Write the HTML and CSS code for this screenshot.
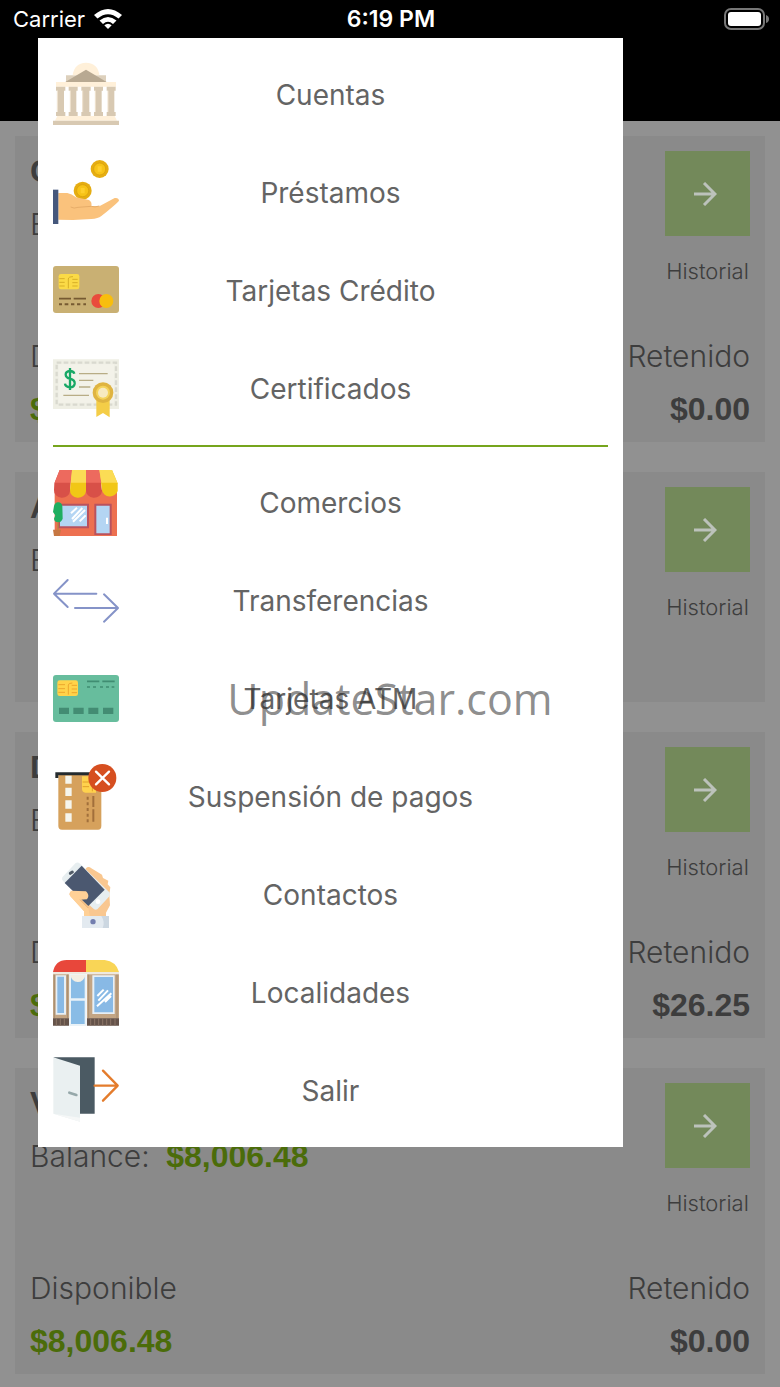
FILE: index.html
```
<!DOCTYPE html>
<html lang="es">
<head>
    <meta charset="UTF-8">
    <meta name="viewport" content="width=device-width, initial-scale=1.0">
    <title>Cuentas</title>
    <link rel="stylesheet" href="styles.css">
</head>
<body>
    <header class="header">
        <div class="status-bar">
            <div class="carrier">
                <span>Carrier</span>
                <svg class="wifi" viewBox="0 0 28 20" aria-hidden="true">
                    <path d="M0 6Q14-6 28 6L24.500 9.600Q14 1 3.500 9.600Z" fill="#fff"/>
                    <path d="M5.500 11.500Q14 4.500 22.500 11.500L19 15Q14 10.500 9 15Z" fill="#fff"/>
                    <path d="M10.300 16.300Q14 13 17.700 16.300L14 20Z" fill="#fff"/>
                </svg>
            </div>
            <div class="clock">6:19 PM</div>
            <svg class="battery" viewBox="0 0 46 22" aria-hidden="true">
                <rect x="2" y="1" width="39" height="20" rx="6" fill="none" stroke="#777" stroke-width="2"/>
                <rect x="5" y="4" width="33" height="14" rx="3" fill="#fff"/>
                <path d="M43 7Q46 8 46 11Q46 14 43 15Z" fill="#777"/>
            </svg>
        </div>
    </header>

    <main class="accounts">
        <section class="card">
            <div class="card-top">
                <div class="account">
                    <h2>Cuenta</h2>
                    <p>Balance:</p>
                </div>
                <div class="history">
                    <button type="button" aria-label="Historial"><svg viewBox="0 0 24 24"><path d="M1 12H22M11 1L22 12L11 23"/></svg></button>
                    <span>Historial</span>
                </div>
            </div>
            <div class="card-bottom">
                <div><p>Disponible</p><strong class="green">$0.00</strong></div>
                <div class="held"><p>Retenido</p><strong>$0.00</strong></div>
            </div>
        </section>
        <section class="card">
            <div class="card-top">
                <div class="account">
                    <h2>Ahorro</h2>
                    <p>Balance:</p>
                </div>
                <div class="history">
                    <button type="button" aria-label="Historial"><svg viewBox="0 0 24 24"><path d="M1 12H22M11 1L22 12L11 23"/></svg></button>
                    <span>Historial</span>
                </div>
            </div>
        </section>
        <section class="card">
            <div class="card-top">
                <div class="account">
                    <h2>Depósito</h2>
                    <p>Balance:</p>
                </div>
                <div class="history">
                    <button type="button" aria-label="Historial"><svg viewBox="0 0 24 24"><path d="M1 12H22M11 1L22 12L11 23"/></svg></button>
                    <span>Historial</span>
                </div>
            </div>
            <div class="card-bottom">
                <div><p>Disponible</p><strong class="green">$0.00</strong></div>
                <div class="held"><p>Retenido</p><strong>$26.25</strong></div>
            </div>
        </section>
        <section class="card">
            <div class="card-top">
                <div class="account">
                    <h2>Vista</h2>
                    <p>Balance: <strong class="green">$8,006.48</strong></p>
                </div>
                <div class="history">
                    <button type="button" aria-label="Historial"><svg viewBox="0 0 24 24"><path d="M1 12H22M11 1L22 12L11 23"/></svg></button>
                    <span>Historial</span>
                </div>
            </div>
            <div class="card-bottom">
                <div><p>Disponible</p><strong class="green">$8,006.48</strong></div>
                <div class="held"><p>Retenido</p><strong>$0.00</strong></div>
            </div>
        </section>
    </main>

    <nav class="menu">
        <a href="#cuentas">
            <svg viewBox="45 36 198 198" aria-hidden="true">
                <path d="M104 76Q108 40 144 38Q181 40 184 76Z" fill="#fff0d9"/>
                <path d="M84 76H204V97H84Z" fill="#ddd0bc"/>
                <path d="M104 76L144 44L184 76Z" fill="#fff0d9"/>
                <path d="M82 96L144 59L206 96Z" fill="#b8a992"/>
                <path d="M54 96H234V110H54ZM58 198H230L237 212H51Z" fill="#fff0d9"/>
                <path d="M54 110H82V122H78V186H82V198H54V186H59V122H54ZM92 110H119V122H115V186H119V198H92V186H97V122H92ZM130 110H158V122H154V186H158V198H130V186H134V122H130ZM168 110H195V122H191V186H195V198H168V186H172V122H168ZM206 110H233V122H229V186H233V198H206V186H210V122H206Z" fill="#d8c9b2"/>
                <path d="M58 122V186M97 122V186M134 122V186M172 122V186M210 122V186" stroke="#eee1cd" stroke-width="3"/>
                <path d="M45 212H243V225H45Z" fill="#d8c9b2"/>
            </svg>
            <span>Cuentas</span>
        </a>
        <a href="#prestamos">
            <svg viewBox="45 330 198 198" aria-hidden="true">
                <g fill="#e5ad13"><circle cx="185" cy="357" r="27"/><circle cx="134" cy="422" r="27"/></g>
                <g fill="#f7c318" stroke="#d79f0c" stroke-width="2"><circle cx="185" cy="357" r="18"/><circle cx="134" cy="422" r="18"/></g>
                <path d="M179 349H191V365H179ZM128 414H140V430H128Z" fill="#ffcf2d"/>
                <path d="M61 429H88Q101 431 114 442L153 450Q163 456 160 468L184 469L230 444Q242 442 243 452Q235 462 190 498Q180 506 160 507L105 510L61 509Z" fill="#fac27c"/>
                <path d="M98 471Q108 477 120 472L160 469Q170 473 184 468" fill="none" stroke="#e7ad69" stroke-width="3"/>
                <path d="M45 419H61V522H45Z" fill="#45577c"/>
            </svg>
            <span>Préstamos</span>
        </a>
        <a href="#tarjetas-credito">
            <svg viewBox="45 24 198 198" aria-hidden="true">
                <rect x="45" y="48" width="198" height="141" rx="9" fill="#c9b073"/>
                <rect x="62" y="72" width="62" height="46" rx="7" fill="#fbda46"/>
                <path d="M64 86H80M64 97H80M64 108H80M91 115V87Q91 80 105 80M103 88H119M103 98H119M103 108H119" fill="none" stroke="#d7af27" stroke-width="3"/>
                <path d="M63 146H99M107 146H144" stroke="#765a32" stroke-width="5"/>
                <path d="M63 163H72M80 163H91M99 163H109M117 163H127M136 163H144" stroke="#765a32" stroke-width="6"/>
                <circle cx="181" cy="153" r="21" fill="#e94b3c"/>
                <circle cx="205" cy="153" r="21" fill="#f8be0d"/>
            </svg>
            <span>Tarjetas Crédito</span>
        </a>
        <a href="#certificados">
            <svg viewBox="45 318 198 198" aria-hidden="true">
                <path d="M45 328H243V477H45Z" fill="#efefe5"/>
                <path d="M56 338H234V464H56Z" fill="none" stroke="#d9d9cf" stroke-width="7" stroke-dasharray="14 7"/>
                <path d="M62 343H228V458H62Z" fill="#f3f2e9"/>
                <path d="M123 371H209M123 391H166M123 411H157M76 436H153" stroke="#b8ad86" stroke-width="4"/>
                <path d="M109 371Q107 363 96 363Q83 364 83 374Q84 384 96 386Q111 390 110 401Q108 412 96 412Q82 411 81 401M96 354V420" fill="none" stroke="#18a866" stroke-width="7"/>
                <path d="M175 444H215V502L195 489L175 501Z" fill="#f4cd47"/>
                <circle cx="195" cy="428" r="31" fill="#dfb441"/>
                <circle cx="195" cy="428" r="21" fill="#f4d35a"/>
                <circle cx="195" cy="428" r="15" fill="#f7eac0"/>
            </svg>
            <span>Certificados</span>
        </a>
        <hr>
        <a href="#comercios">
            <svg viewBox="45 60 198 198" aria-hidden="true">
                <path d="M50 120H237V258H50Z" fill="#ed7050"/>
                <path d="M60 161H153V235H60ZM169 161H221V255H169Z" fill="#b9525e"/>
                <path d="M66 167H147V229H66ZM175 167H215V250H175Z" fill="#b4d5f3"/>
                <path d="M99 190L117 173M105 215L141 180M102 207L133 174M125 214L143 196" stroke="#fff" stroke-width="6"/>
                <path d="M207 203V222" stroke="#fff" stroke-width="6"/>
                <path d="M65 60H102L96 123A24 22 0 0 1 48 120L49 100Z" fill="#d85048"/>
                <path d="M102 60H144V123A24 22 0 0 1 96 120Z" fill="#f1c716"/>
                <path d="M144 60H184L192 123A24 22 0 0 1 144 120Z" fill="#d85048"/>
                <path d="M184 60H222L239 100V123A24 22 0 0 1 192 120Z" fill="#f1c716"/>
                <path d="M65 60H102L98 98H50ZM144 60H184L190 98H144Z" fill="#ed6a5e"/>
                <path d="M102 60H144V98H98ZM184 60H222L238 98H190Z" fill="#fbdc55"/>
                <path d="M48 168Q52 156 61 157Q71 158 73 168L74 206Q70 217 60 217Q49 216 48 206L52 196L45 186Z" fill="#1fae60"/>
                <path d="M45 239H69L65 258H48Z" fill="#c67742"/>
                <path d="M60 217V239" stroke="#b38a43" stroke-width="4"/>
            </svg>
            <span>Comercios</span>
        </a>
        <a href="#transferencias">
            <svg viewBox="45 354 198 198" aria-hidden="true">
                <path d="M175 431H49M89 390L48 431L89 471M111 474H239M198 433L240 474L198 515" fill="none" stroke="#8593c8" stroke-width="6" stroke-linecap="round" stroke-linejoin="round"/>
            </svg>
            <span>Transferencias</span>
        </a>
        <a href="#tarjetas-atm">
            <svg viewBox="45 18 198 198" aria-hidden="true">
                <rect x="45" y="45" width="198" height="141" rx="9" fill="#67bd9d"/>
                <rect x="58" y="61" width="62" height="47" rx="7" fill="#ffd34a"/>
                <path d="M61 74H81M61 86H81M61 97H81M91 104V75Q91 69 103 69M101 76H117M101 87H117M101 98H117" fill="none" stroke="#eda72d" stroke-width="3"/>
                <path d="M147 64H184M193 64H230M147 81H156M165 81H174M186 81H195M204 81H213M221 81H229" stroke="#408d72" stroke-width="5"/>
                <path d="M63 143H93V162H63ZM106 143H137V162H106ZM151 143H181V162H151ZM195 143H226V162H195Z" fill="#438c73"/>
            </svg>
            <span>Tarjetas ATM</span>
        </a>
        <a href="#suspension">
            <svg viewBox="45 312 198 198" aria-hidden="true">
                <path d="M61 345H190V498Q190 509 180 509H72Q61 509 61 498Z" fill="#d6a15c"/>
                <path d="M52 337H170V346H61V354H52Z" fill="#252b2e"/>
                <path d="M82 347H101V371H82ZM82 383H101V408H82ZM82 421H101V446H82ZM82 460H101V485H82Z" fill="#f5f5ed"/>
                <path d="M132 349H174V398H142Q132 396 132 387Z" fill="#ffd24d"/>
                <path d="M134 366H153M134 380H153M163 350V394" stroke="#e2a129" stroke-width="3"/>
                <path d="M166 408V441M166 448V485" stroke="#a16f3b" stroke-width="6"/>
                <path d="M149 410V487" stroke="#a16f3b" stroke-width="6" stroke-dasharray="9 8"/>
                <circle cx="193" cy="354" r="42" fill="#d64f20"/>
                <path d="M174 335L213 373M213 335L174 373" stroke="#fff" stroke-width="7" stroke-linecap="round"/>
            </svg>
            <span>Suspensión de pagos</span>
        </a>
        <a href="#contactos">
            <svg viewBox="45 36 198 198" aria-hidden="true">
                <path d="M144 55Q151 47 160 55L192 74L195 84L211 92L209 103L217 112L214 133L216 166L204 188V202H138V184L94 134Q93 123 107 122Z" fill="#f9c790"/>
                <path d="M73 82L113 39Q119 35 127 42L214 127Q218 134 213 140L178 178Q170 182 164 174L75 93Q70 88 73 82Z" fill="#e7eef0"/>
                <path d="M80 99L131 47L200 119L151 168Z" fill="#4b5870"/>
                <path d="M97 70L103 66" stroke="#515b68" stroke-width="9" stroke-linecap="round"/>
                <circle cx="180" cy="155" r="7" fill="#fff"/>
                <path d="M98 122L144 124Q157 136 147 148L126 149L151 174L156 202H138V183L96 138Z" fill="#ffd096"/>
                <path d="M126 149L151 174" stroke="#e9b176" stroke-width="3"/>
                <path d="M132 198H213V234H132Z" fill="#e3eaf0"/>
                <path d="M190 198H213V234H194Q202 216 190 198Z" fill="#ccd7e1"/>
                <circle cx="165" cy="215" r="8" fill="#737eae"/>
            </svg>
            <span>Contactos</span>
        </a>
        <a href="#localidades">
            <svg viewBox="45 330 198 198" aria-hidden="true">
                <path d="M45 366Q52 330 86 330H144V366Z" fill="#e8473b"/>
                <path d="M144 330H200Q234 334 243 366H144Z" fill="#f9d556"/>
                <path d="M45 366H243V372H45Z" fill="#eee9df"/>
                <path d="M45 373H94V506H45ZM147 373H243V506H147Z" fill="#c3a584"/>
                <path d="M49 374V504M89 374V504M152 374V504M237 374V504" stroke="#a68c70" stroke-width="3"/>
                <path d="M53 376H84V494H53ZM163 376H230V492H163Z" fill="#e7eff5"/>
                <path d="M58 380H78V489H58ZM169 381H225V487H169Z" fill="#88b9e5"/>
                <path d="M94 373H146V528H94Z" fill="#eaf2f7"/>
                <path d="M99 376H140V445H99ZM99 452H140V522H99Z" fill="#89bce6"/>
                <path d="M97 374H143Q137 396 119 396Q101 395 97 374Z" fill="#f3eee3"/>
                <path d="M178 438L197 419M177 469L220 430M181 452L210 421M201 456L219 438" stroke="#fff" stroke-width="6"/>
                <path d="M45 505H93V527H45ZM147 505H243V527H147Z" fill="#65534a"/>
                <path d="M55 505V527M67 505V527M79 505V527M158 505V527M170 505V527M182 505V527M194 505V527M206 505V527M218 505V527M231 505V527" stroke="#8a7466" stroke-width="3"/>
            </svg>
            <span>Localidades</span>
        </a>
        <a href="#salir">
            <svg viewBox="159 54 198 198" aria-hidden="true">
                <path d="M160 52H284V221H230V100Z" fill="#4b5a63"/>
                <path d="M160 52L240 77V245L160 221Z" fill="#eaf0f1"/>
                <path d="M160 221L240 233V245Z" fill="#f5f7f7"/>
                <path d="M208 158L229 165" stroke="#96a8aa" stroke-width="8" stroke-linecap="round"/>
                <path d="M284 137H352M309 92L353 137L309 182" fill="none" stroke="#e47c2c" stroke-width="7" stroke-linecap="round" stroke-linejoin="round"/>
            </svg>
            <span>Salir</span>
        </a>
    </nav>
    <div class="watermark">UpdateStar.com</div>
</body>
</html>
```
FILE: styles.css
```
* {
    box-sizing: border-box;
}
body {
    position: relative;
    margin: 0;
    background-color: #919191;
    color: #3d3d3d;
    font-family: Inter, "Liberation Sans", sans-serif;
}
.header {
    background: #000;
    padding-bottom: 83px;
}
.status-bar {
    display: grid;
    grid-template-columns: 1fr auto 1fr;
    align-items: center;
    height: 38px;
    padding: 0 11px 0 13px;
    color: #fff;
    font-size: 22px;
}
.carrier {
    display: flex;
    align-items: center;
    gap: 9px;
}
.wifi {
    width: 28px;
    height: 20px;
}
.clock {
    font-size: 23px;
    font-weight: 600;
}
.battery {
    width: 46px;
    height: 22px;
    justify-self: end;
}
.accounts {
    display: flex;
    flex-direction: column;
    gap: 30px;
    padding: 15px 15px 13px;
}
.card {
    min-height: 230px;
    padding: 15px 15px 13px;
    background: #8a8a8a;
    font-size: 30px;
    font-weight: 300;
    line-height: 40px;
}
.card h2,
.card strong {
    font-family: "Liberation Sans", sans-serif;
    font-size: 32px;
    font-weight: bold;
}
.card h2,
.card p {
    margin: 0 0 13px;
}
.card .green {
    color: #4b6c0a;
}
.card-top,
.card-bottom {
    display: flex;
    justify-content: space-between;
}
.account .green {
    margin-left: 8px;
}
.history {
    display: flex;
    flex-direction: column;
    align-items: center;
    gap: 20px;
    font-size: 22px;
    line-height: 30px;
}
.history button {
    display: flex;
    align-items: center;
    justify-content: center;
    width: 85px;
    height: 85px;
    padding: 0 5px 0 0;
    border: none;
    background: #73895a;
    cursor: pointer;
}
.history svg {
    width: 24px;
    height: 24px;
    fill: none;
    stroke: #bcc2bb;
    stroke-width: 3;
}
.card-bottom {
    margin-top: 50px;
}
.held {
    text-align: right;
}
.menu {
    position: absolute;
    top: 38px;
    left: 38px;
    width: 75%;
    padding: 8px 15px 7px;
    background: #fff;
}
.menu a {
    display: grid;
    grid-template-columns: 66px 1fr 66px;
    align-items: center;
    height: 98px;
    color: #646464;
    font-size: 28px;
    font-weight: 400;
    text-align: center;
    text-decoration: none;
}
.menu svg {
    width: 66px;
    height: 66px;
    overflow: visible;
}
.menu hr {
    height: 2px;
    margin: 7px 0;
    border: none;
    background: #76a51d;
}
.watermark {
    position: absolute;
    top: 50%;
    left: 0;
    width: 100%;
    color: rgba(45, 45, 45, 0.55);
    font-family: "Open Sans", "Noto Sans", sans-serif;
    font-size: 43px;
    line-height: 60px;
    margin-top: -25px;
    text-align: center;
    pointer-events: none;
}
```
